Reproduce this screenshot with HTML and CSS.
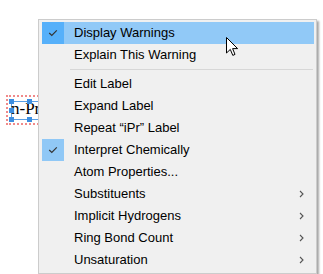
FILE: index.html
```html
<!DOCTYPE html>
<html>
<head>
<meta charset="utf-8">
<link rel="stylesheet" href="styles.css">
</head>
<body>
<div class="canvas">
  <div class="warn-box"></div>
  <div class="sel-box">
    <span class="label">n-Pr</span>
    <i class="h h-tl"></i><i class="h h-tm"></i><i class="h h-tr"></i>
    <i class="h h-ml"></i><i class="h h-mr"></i>
    <i class="h h-bl"></i><i class="h h-bm"></i><i class="h h-br"></i>
  </div>
</div>
<div class="menu">
  <div class="item hover checked"><span class="check"><svg width="10" height="8" viewBox="0 0 10 8"><path d="M1.2 4 L3.8 6.4 L8.8 1.4" fill="none" stroke="#333" stroke-width="1.2"/></svg></span><span class="text">Display Warnings</span></div>
  <div class="item"><span class="check"></span><span class="text">Explain This Warning</span></div>
  <div class="sep"></div>
  <div class="item"><span class="check"></span><span class="text">Edit Label</span></div>
  <div class="item"><span class="check"></span><span class="text">Expand Label</span></div>
  <div class="item"><span class="check"></span><span class="text">Repeat “iPr” Label</span></div>
  <div class="item checked"><span class="check"><svg width="10" height="8" viewBox="0 0 10 8"><path d="M1.2 4 L3.8 6.4 L8.8 1.4" fill="none" stroke="#333" stroke-width="1.2"/></svg></span><span class="text">Interpret Chemically</span></div>
  <div class="item"><span class="check"></span><span class="text">Atom Properties...</span></div>
  <div class="item sub"><span class="check"></span><span class="text">Substituents</span><span class="arrow"><svg width="5" height="8" viewBox="0 0 5 8"><path d="M1 1 L4 4 L1 7" fill="none" stroke="#555" stroke-width="1.1"/></svg></span></div>
  <div class="item sub"><span class="check"></span><span class="text">Implicit Hydrogens</span><span class="arrow"><svg width="5" height="8" viewBox="0 0 5 8"><path d="M1 1 L4 4 L1 7" fill="none" stroke="#555" stroke-width="1.1"/></svg></span></div>
  <div class="item sub"><span class="check"></span><span class="text">Ring Bond Count</span><span class="arrow"><svg width="5" height="8" viewBox="0 0 5 8"><path d="M1 1 L4 4 L1 7" fill="none" stroke="#555" stroke-width="1.1"/></svg></span></div>
  <div class="item sub"><span class="check"></span><span class="text">Unsaturation</span><span class="arrow"><svg width="5" height="8" viewBox="0 0 5 8"><path d="M1 1 L4 4 L1 7" fill="none" stroke="#555" stroke-width="1.1"/></svg></span></div>
</div>
<svg class="cursor" width="13" height="20" viewBox="0 0 13 20"><path d="M0.5 0.5 L0.5 16 L4.3 12.4 L6.8 18.4 L9 17.4 L6.6 11.6 L11.6 11.6 Z" fill="#fff" stroke="#000" stroke-width="1" stroke-linejoin="miter"/></svg>
</body>
</html>
```

FILE: styles.css
```css
html, body {
  margin: 0;
  padding: 0;
  background: #fff;
  width: 323px;
  height: 274px;
  overflow: hidden;
  position: relative;
}

.canvas {
  position: absolute;
  left: 0;
  top: 0;
  width: 323px;
  height: 274px;
}

.warn-box {
  position: absolute;
  left: 6px;
  top: 95px;
  width: 40px;
  height: 30px;
  box-sizing: border-box;
  border: 2px dotted #f08a8a;
}

.sel-box {
  position: absolute;
  left: 11px;
  top: 101px;
  width: 40px;
  height: 19px;
  box-sizing: border-box;
  border: 1px solid #5aa0e6;
}

.label {
  position: absolute;
  left: -1px;
  top: -3px;
  font-family: "Liberation Serif", serif;
  font-size: 17px;
  color: #000;
  white-space: nowrap;
}

.h {
  position: absolute;
  width: 5px;
  height: 5px;
  background: #3d8ee0;
}
.h-tl { left: -3px; top: -3px; }
.h-tm { left: 15px; top: -3px; }
.h-tr { right: -3px; top: -3px; }
.h-ml { left: -3px; top: 6px; }
.h-mr { right: -3px; top: 6px; }
.h-bl { left: -3px; bottom: -3px; }
.h-bm { left: 15px; bottom: -3px; }
.h-br { right: -3px; bottom: -3px; }

.menu {
  position: absolute;
  left: 38px;
  top: 19px;
  width: 279px;
  box-sizing: border-box;
  background: #f0f0f0;
  border: 1px solid #cccccc;
  padding: 2px 2px 2px 3px;
  box-shadow: 2px 2px 2px rgba(0, 0, 0, 0.35);
  font-family: "Liberation Sans", Arial, sans-serif;
  font-size: 13px;
  color: #000;
}

.item {
  display: flex;
  align-items: center;
  height: 22px;
}

.item.hover {
  background: #91c9f7;
}

.check {
  width: 22px;
  height: 22px;
  display: flex;
  align-items: center;
  justify-content: center;
  flex: none;
}

.item.checked .check {
  background: #90c8f6;
}

.item.hover.checked .check {
  background: #56b0fa;
}

.text {
  margin-left: 10px;
  padding-bottom: 2px;
  flex: 1;
  white-space: nowrap;
}

.arrow {
  width: 5px;
  height: 8px;
  margin-right: 10px;
  display: flex;
}

.sep {
  height: 1px;
  background: #d7d7d7;
  margin: 3px 1px 3px 28px;
}

.cursor {
  position: absolute;
  left: 226px;
  top: 37px;
}
```
